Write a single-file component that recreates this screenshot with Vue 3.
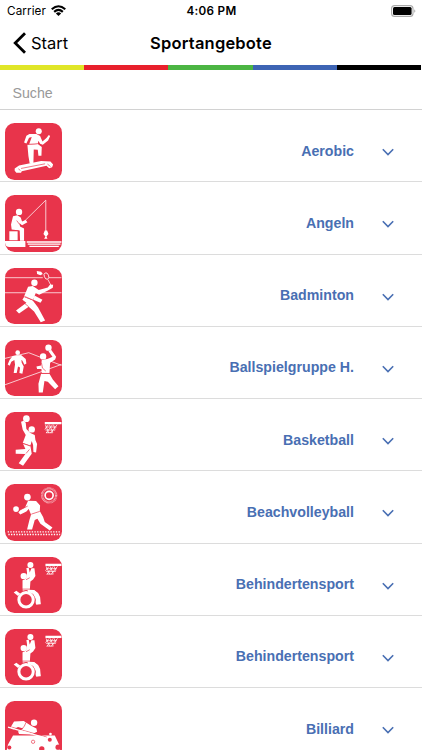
<script setup>
const sports = [
  { name: 'Aerobic', icon: 'aerobic', top: 15 },
  { name: 'Angeln', icon: 'fishing', top: 15.5 },
  { name: 'Badminton', icon: 'badminton', top: 17 },
  { name: 'Ballspielgruppe H.', icon: 'handball', top: 15 },
  { name: 'Basketball', icon: 'basketball', top: 15 },
  { name: 'Beachvolleyball', icon: 'beach', top: 13 },
  { name: 'Behindertensport', icon: 'wheelchair', top: 14 },
  { name: 'Behindertensport', icon: 'wheelchair', top: 14 },
  { name: 'Billiard', icon: 'billiard', top: 34 },
]
const stripes = ['yellow', 'crimson', 'green', 'blue', 'black']
</script>

<template>
  <div class="screen">
    <div class="status">
      <div class="carrier">
        <span>Carrier</span>
        <svg class="wifi" viewBox="0 0 16 12">
          <path d="M.8 4.4Q8-2 15.2 4.4M3.4 7.2Q8 3 12.6 7.2" fill="none" stroke="#000" stroke-width="2.3" />
          <path d="M5.2 8.8Q8 6.4 10.8 8.8L8 11.6Z" />
        </svg>
      </div>
      <span class="time">4:06 PM</span>
      <div class="power">
        <svg class="battery" viewBox="0 0 25 12">
          <rect x=".6" y=".6" width="21.4" height="10.8" rx="3" fill="none" stroke="#aaa" stroke-width="1.1" />
          <rect x="2" y="2" width="18.6" height="8" rx="1.5" />
          <path d="M23.4 4.2Q25.2 6 23.4 7.8Z" fill="#999" />
        </svg>
      </div>
    </div>

    <header class="nav">
      <div class="back">
        <svg viewBox="0 0 14 22"><path d="M12 1.2 2.2 11 12 20.8" fill="none" stroke="#000" stroke-width="2.8" /></svg>
        <span>Start</span>
      </div>
      <h1>Sportangebote</h1>
      <div class="end"></div>
    </header>

    <div class="stripes"><i v-for="s in stripes" :key="s" :class="s"></i></div>

    <div class="search">Suche</div>

    <div v-for="(s, i) in sports" :key="i" class="row">
      <svg class="tile" :viewBox="`15 ${s.top} 169 169`">
        <g v-if="s.icon === 'aerobic'" class="fill">
          <circle cx="116" cy="40" r="9" />
          <path d="M88 48 109 48 120 54 127 70 139 60 146 51 150 54 144 67 128 80 120 77 115 68 113 77 87 79 95 57 87 59 79 76 72 73 79 53Z" />
          <path d="M82 80 113 78 125 87 124 113 115 113 113 95 101 94 100 135 89 137 85 114Z" />
          <path d="M44 151 57 142 123 129 151 130 159 139 156 147 147 150 139 143 65 159 63 164 49 164 44 158Z" />
          <path class="cut" d="M63 151 135 137M55 152 61 157M142 138 151 145M82 79 113 77" />
        </g>
        <g v-else-if="s.icon === 'fishing'" class="fill">
          <circle cx="57" cy="66" r="9.5" />
          <path d="M39 79 52 76 62 83 66 95 77 90 82 97 66 106 58 99 60 110 72 116 72 152 60 152 59 122 35 119 33 104Z" />
          <path d="M28 124H53V151H28ZM15 153H76V171H28Q18 171 15 162Z" />
          <path class="line" d="M65 102 137 31V125" />
          <path d="M134 122H141L145 132 139 140 142 146H132L136 140 130 132Z" />
          <path class="line thick" d="M80 156H184M83 162.5H181M88 169H176" />
          <path class="cut" d="M29 122H55V151M50 92 59 104" />
        </g>
        <g v-else-if="s.icon === 'badminton'" class="fill">
          <path class="line" d="M15 46H128M146 46H184M15 91H184" />
          <circle cx="103" cy="61" r="9.5" />
          <path d="M84 73 98 71 116 83 143 75 150 66 159 67 158 76 142 85 117 97 107 92 99 113 72 102Z" />
          <path d="M72 104 98 114 114 135 135 174 122 179 102 147 86 133 57 153 48 144 79 121 67 112Z" />
          <path d="M103 99 127 112 121 121 100 112Z" />
          <ellipse cx="139" cy="41" rx="6.5" ry="10" transform="rotate(-22 139 41)" fill="none" stroke="#fff" stroke-width="2.3" />
          <path class="line" d="M143 51 153 70" />
          <path d="M110 26 123 28 128 35 121 39 111 35Z" />
          <path class="cut" d="M74 102 99 113M74 123 86 133" />
        </g>
        <g v-else-if="s.icon === 'handball'" class="fill">
          <path class="line" d="M15 70 86 53 184 91M15 149 184 88" />
          <circle cx="53" cy="53" r="7" />
          <path d="M38 63 63 60 77 72 79 85 73 89 67 77 64 74 65 83 71 94 67 116 58 114 60 97 54 94 50 114 41 114 45 88 43 75 34 80 29 92 23 88 29 74Z" />
          <circle cx="145" cy="38" r="9.5" /><circle cx="129" cy="64" r="9.5" />
          <path d="M125 75 138 73 149 69 157 65 145 49 153 44 168 65 165 73 150 83 148 114 125 114 124 102 111 102 109 94 123 91Z" />
          <path d="M123 116 148 116 158 133 175 153 165 162 143 140 133 138 128 172 116 172 115 146Z" />
          <path class="cut" d="M124 83 127 99 137 108M123 115H149" />
        </g>
        <g v-else-if="s.icon === 'basketball'" class="fill">
          <circle cx="79" cy="35" r="10" /><circle cx="95" cy="67" r="9.5" />
          <path d="M63 44 71 41 77 47 79 66 91 78 104 84 106 99 111 111 108 136 100 135 99 114 95 102 91 115 68 108 77 84 68 68Z" />
          <path d="M69 110 91 117 95 140 69 176 56 168 76 141 47 140 47 128 76 126Z" />
          <path d="M134 45H184V52H134Z" />
          <path class="line" d="M136 53 146 78M148 53 158 76M160 53 165 67M145 53 134 67M157 53 138 78M171 53 151 78M136 60H169M136 69H165M138 77H158" />
          <path class="cut" d="M69 109 91 117M78 139 88 127" />
        </g>
        <g v-else-if="s.icon === 'beach'" class="fill">
          <circle cx="147" cy="47" r="21" fill="none" stroke="#fff" stroke-width="7" stroke-dasharray="1.5 1.8" opacity=".8" />
          <circle cx="147" cy="47" r="12" fill="none" stroke="#fff" stroke-width="5" />
          <circle cx="82" cy="52" r="10" /><circle cx="48" cy="88" r="8.5" />
          <path d="M84 63 108 64 120 77 119 96 93 105 86 88 79 95 61 104 55 98 61 91 75 83Z" />
          <path d="M93 104 119 94 129 112 134 127 157 143 149 152 121 132 112 117 104 121 96 149 81 149 88 121Z" />
          <path class="cut" d="M94 103 119 95M59 91 83 79" />
          <path class="line dots" d="M23 156H180M25 164H180" />
        </g>
        <g v-else-if="s.icon === 'wheelchair'" class="fill">
          <circle cx="91" cy="38" r="9" /><circle cx="71" cy="71" r="9.5" />
          <path d="M79 47 86 46 89 60 94 48 103 48 106 71 99 81 91 87 89 116 68 119 68 84 78 78 81 61Z" />
          <path d="M69 114 101 113 114 124 121 154 108 156 103 140 95 128Z" />
          <circle cx="78" cy="142" r="22.5" fill="#e8344b" stroke="#e8344b" stroke-width="14" />
          <circle cx="78" cy="142" r="21.5" fill="#e8344b" stroke="#fff" stroke-width="9" />
          <path d="M68 83H89V108H68Z" />
          <path d="M83 112 102 113 114 122 120 134 122 155 109 156 107 138 99 125 83 118Z" />
          <path d="M41 120 49 115 61 124 54 131Z" />
          <path d="M136 34H184V41H136Z" />
          <path class="line" d="M138 42 149 66M150 42 159 63M162 42 167 55M147 42 136 55M159 42 140 66M172 42 153 66M138 49H170M138 57H167M140 65H160" />
          <path class="cut" d="M68 110H90M78 82 89 76" />
        </g>
        <g v-else class="fill">
          <path d="M24 164 39 137H164L177 165 184 203H15Z" />
          <circle cx="102" cy="99" r="9.5" />
          <path d="M42 95 71 94 93 108 109 116 111 126 94 134 57 133 54 125 70 116 54 112 39 119 31 114Z" />
          <path class="cut" d="M24 109 140 142M59 123 72 111 78 98" />
          <path class="line thick" d="M24 112 139 145" />
          <g class="balls"><circle cx="149" cy="150" r="6" /><circle cx="125" cy="177" r="8" /><circle cx="174" cy="172" r="8" /><circle cx="28" cy="173" r="6" /></g>
          <circle cx="99" cy="156" r="5" fill="#fff" stroke="#e8344b" stroke-width="2" />
          <circle cx="151" cy="133" r="4" />
        </g>
      </svg>
      <span class="label">{{ s.name }}</span>
      <svg class="chevron" viewBox="0 0 12 8"><path d="M.8 1.2 6 6.6 11.2 1.2" fill="none" stroke="#496fb3" stroke-width="1.6" /></svg>
    </div>
  </div>
</template>

<style>
body { margin: 0; overflow: hidden; background: #fff; }
</style>

<style scoped>
.screen { width: 422px; height: 750px; overflow: hidden; background: #fff; color: #000; font-family: Inter, "Liberation Sans", sans-serif; }
.status { height: 22px; display: grid; grid-template-columns: 1fr auto 1fr; align-items: center; padding: 0 6px 0 7px; box-sizing: border-box; font-size: 11.7px; }
.carrier { display: flex; align-items: center; gap: 5px; letter-spacing: .1px; }
.wifi { width: 15px; height: 11.5px; }
.time { font-weight: 600; letter-spacing: .3px; }
.power { display: flex; justify-content: flex-end; }
.battery { width: 25px; height: 12px; }
.nav { height: 43px; display: grid; grid-template-columns: 1fr auto 1fr; align-items: center; padding: 0 13px 1px; box-sizing: border-box; }
.back { display: flex; align-items: center; gap: 4px; font-size: 16.5px; }
.back svg { width: 14px; height: 22px; }
h1 { margin: 0; font-size: 16.5px; font-weight: 600; letter-spacing: .2px; }
.stripes { display: flex; width: 421px; height: 6px; }
.stripes i { flex: 1; height: 5px; margin-top: .4px; }
.yellow { background: #e0e628; }
.crimson { background: #e8202c; }
.green { background: #4bb543; }
.blue { background: #3d64b4; }
.black { background: #000; }
.search { height: 39px; box-sizing: border-box; border-bottom: 1px solid #d2d2d2; padding-left: 12.5px; font: 14.2px/44px "Liberation Sans", sans-serif; color: #999; }
.row { height: 72.25px; box-sizing: border-box; border-bottom: 1px solid #dcdcdc; display: flex; align-items: center; padding: 10px 28px 0 5px; }
.tile { flex: none; width: 56.5px; height: 56.5px; margin-top: 1.5px; border-radius: 9.5px; background: #e8344b; }
.fill { fill: #fff; }
.line { fill: none; stroke: #fff; stroke-width: 2.2; }
.thick { stroke-width: 4; }
.dots { stroke-width: 4; stroke-dasharray: 4 4; }
.cut { fill: none; stroke: #e8344b; stroke-width: 2; }
.balls { fill: #e8344b; }
.label { flex: 1; text-align: right; font: bold 14.2px/20px "Liberation Sans", sans-serif; color: #496fb3; }
.chevron { width: 12px; height: 8px; margin: 3px 0 0 28px; }
</style>
